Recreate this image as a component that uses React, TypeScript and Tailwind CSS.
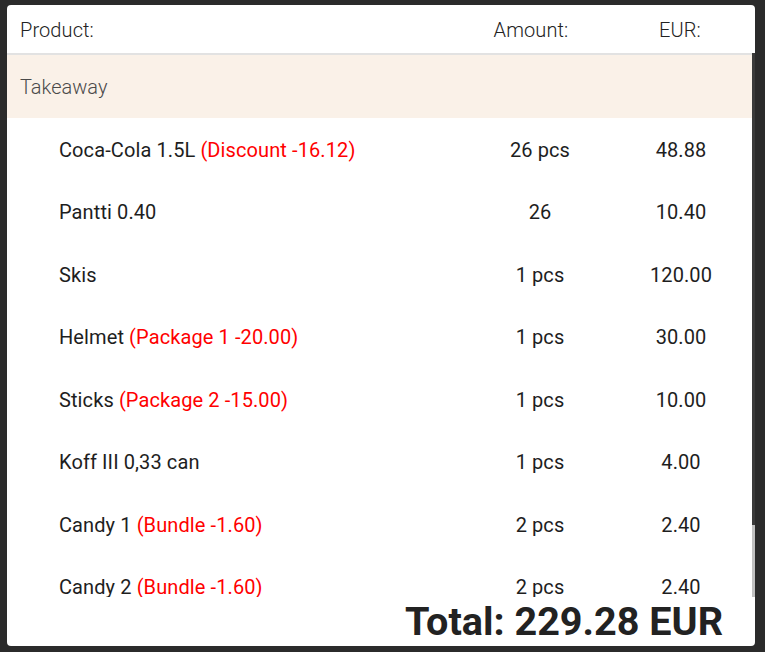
import React from "react";

type Item = { name: string; note?: string; amount: string; eur: string };

const items: Item[] = [
  { name: "Coca-Cola 1.5L", note: "(Discount -16.12)", amount: "26 pcs", eur: "48.88" },
  { name: "Pantti 0.40", amount: "26", eur: "10.40" },
  { name: "Skis", amount: "1 pcs", eur: "120.00" },
  { name: "Helmet", note: "(Package 1 -20.00)", amount: "1 pcs", eur: "30.00" },
  { name: "Sticks", note: "(Package 2 -15.00)", amount: "1 pcs", eur: "10.00" },
  { name: "Koff III 0,33 can", amount: "1 pcs", eur: "4.00" },
  { name: "Candy 1", note: "(Bundle -1.60)", amount: "2 pcs", eur: "2.40" },
  { name: "Candy 2", note: "(Bundle -1.60)", amount: "2 pcs", eur: "2.40" },
];

export default function App() {
  return (
    <div
      className="w-[765px] h-[652px] bg-[#2b2b2b] pt-[5px] pl-[7px] pr-[10px] pb-[6px]"
      style={{ fontFamily: "Roboto, 'Liberation Sans', sans-serif" }}
    >
      <div className="w-full h-full bg-white rounded-[4px] overflow-hidden flex flex-col">
        {/* Header */}
        <div className="h-[48px] shrink-0 flex items-center pt-[1px] pl-[13px] pr-[25px] gap-[49px] text-[20px] tracking-[0.1px] font-light text-[#222222]">
          <div className="flex-1">Product:</div>
          <div className="w-[100px] text-center">Amount:</div>
          <div className="w-[100px] text-center">EUR:</div>
        </div>
        {/* Scroll region */}
        <div className="h-[544px] shrink-0 flex">
          <div className="flex-1 flex flex-col overflow-hidden">
            <div className="h-[2px] shrink-0 bg-[#e2e2e2]" />
            <div className="h-[62.5px] shrink-0 bg-[#faf1e8] flex items-center pt-[2px] pl-[13px] text-[20px] font-light text-[#4a4a4a]">
              Takeaway
            </div>
            {items.map((it, i) => (
              <div
                key={i}
                className="h-[62.5px] shrink-0 flex items-center pt-[2px] pl-[52px] pr-[21px] gap-[41px] text-[20px] tracking-[0.1px] text-[#1e1e1e]"
              >
                <div className="flex-1 whitespace-nowrap">
                  {it.name}
                  {it.note && <span className="text-[#ff0000]"> {it.note}</span>}
                </div>
                <div className="w-[100px] text-center">{it.amount}</div>
                <div className="w-[100px] text-center">{it.eur}</div>
              </div>
            ))}
          </div>
          <div className="w-[3px] shrink-0 flex flex-col bg-[#3a3a3a]">
            <div className="flex-1" />
            <div className="h-[72px] bg-[#c1c1c1]" />
          </div>
        </div>
        {/* Total */}
        <div className="flex-1 flex items-center justify-end pt-[1px] pr-[32px]">
          <div className="text-[39.6px] font-bold text-[#222222] leading-none">Total: 229.28 EUR</div>
        </div>
      </div>
    </div>
  );
}
